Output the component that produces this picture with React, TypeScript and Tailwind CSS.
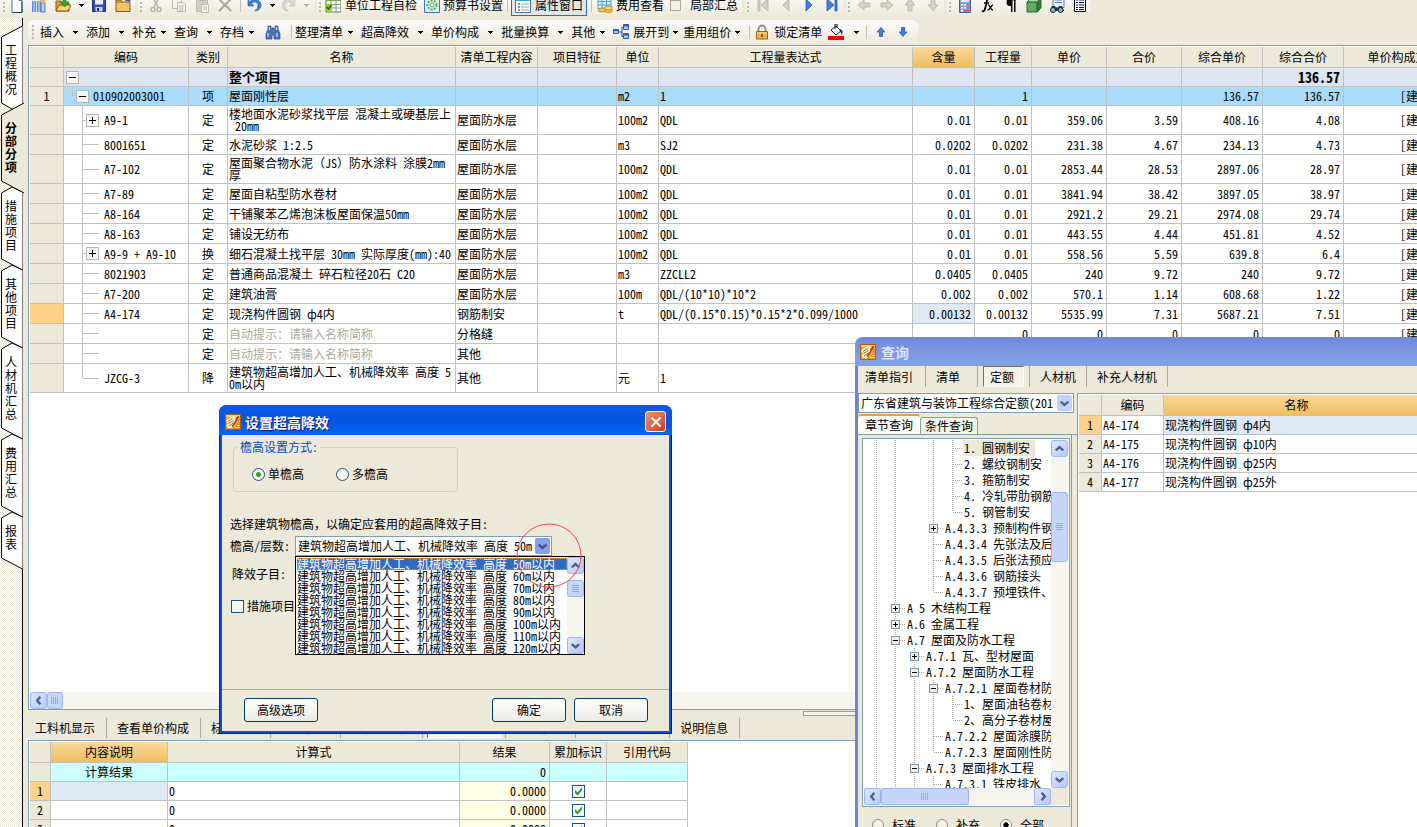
import React from "react";

type IconProps = { children: React.ReactNode; dim?: boolean };

function Icon({ children, dim }: IconProps) {
  return (
    <svg viewBox="0 0 16 16" className={dim ? "h-4 w-4 shrink-0 opacity-60" : "h-4 w-4 shrink-0"} aria-hidden="true">
      {children}
    </svg>
  );
}

const Caret = ({ dim }: { dim?: boolean }) => (
  <svg viewBox="0 0 5 3" className="h-[3px] w-[5px]" aria-hidden="true" shapeRendering="crispEdges">
    <path d="M0 0h5v1h-1v1h-1v1h-1v-1h-1v-1h-1z" fill={dim ? "#aca899" : "#000"} />
  </svg>
);

const Grip = () => (
  <span className="flex h-full w-[6px] shrink-0 items-center justify-center">
    <svg viewBox="0 0 2 14" className="h-[14px] w-[2px]" aria-hidden="true" shapeRendering="crispEdges">
      <path d="M0 0h2v2h-2zM0 4h2v2h-2zM0 8h2v2h-2zM0 12h2v2h-2z" fill="#b9b7a8" />
    </svg>
  </span>
);

const Sep = () => (
  <span className="flex h-full w-2 shrink-0 items-center justify-center">
    <span className="h-[14px] w-px bg-[#c1bfb0]" />
  </span>
);

function IconButton({ label, children, className }: { label: string; children: React.ReactNode; className: string }) {
  return (
    <button type="button" aria-label={label} className={`flex h-full shrink-0 items-center justify-center ${className}`}>
      {children}
    </button>
  );
}

const groupClass = "flex h-full shrink-0 items-center rounded-md bg-gradient-to-b from-[#fdfcfb] to-[#ebe8d9]";

const NewIcon = () => (
  <Icon>
    <path d="M3 .5h7l3 3v12H3z" fill="#fff" stroke="#4a6c9c" />
    <path d="M13 5v10.5H4" fill="none" stroke="#17365d" />
    <path d="M10 .5v3h3" fill="#bcd0ec" stroke="#4a6c9c" />
  </Icon>
);
const BuildingIcon = () => (
  <Icon>
    <path d="M1 4h9v11H1z" fill="#5b8bd6" />
    <path d="M10 6h4v9h-4z" fill="#b9d0f3" stroke="#4a78bd" />
    <path d="M3 4v11M5.500 4v11M8 4v11" stroke="#dfeafc" />
    <path d="M12 0l1 3 3 1-3 1-1 3-1-3-3-1 3-1z" fill="#f5b73b" />
  </Icon>
);
const OpenIcon = () => (
  <Icon>
    <path d="M1 14V4h5l1 2h7v8z" fill="#e2a336" stroke="#8a5b10" />
    <path d="M1 14l3-6h12l-3 6z" fill="#fbd46d" stroke="#8a5b10" />
    <path d="M8 1h3v4h3l-4.500 5L5 5h3z" fill="#39a536" stroke="#1c6d1b" strokeWidth=".7" />
  </Icon>
);
const SaveIcon = () => (
  <Icon>
    <path d="M1.500 1.500h13v13h-13z" fill="#3a49b8" stroke="#202c7e" />
    <path d="M4 1.500h8v6H4z" fill="#e8ecfb" />
    <path d="M4.500 10h7v4.500h-7z" fill="#cfd3e6" />
    <path d="M6 11h2v3H6z" fill="#202c7e" />
  </Icon>
);
const FolderIcon = () => (
  <Icon>
    <path d="M1 5h14v9.500H1z" fill="#f0c469" stroke="#805a1b" />
    <path d="M1 5V3h5l1 2" fill="#d9a23d" stroke="#805a1b" />
    <path d="M9 3l3-3 4 3-2 2z" fill="#3c577e" />
  </Icon>
);
const CutIcon = () => (
  <Icon dim>
    <path d="M5 1l5 9M11 1L6 10" stroke="#8d8b80" strokeWidth="1.500" />
    <circle cx="5" cy="12.500" r="2" fill="none" stroke="#8d8b80" strokeWidth="1.500" />
    <circle cx="11" cy="12.500" r="2" fill="none" stroke="#8d8b80" strokeWidth="1.500" />
  </Icon>
);
const CopyIcon = () => (
  <Icon dim>
    <path d="M1.500 1.500h7l2 2v8h-9z" fill="#f4f3ee" stroke="#99978c" />
    <path d="M6.500 5.500h6l2 2v7h-8z" fill="#f4f3ee" stroke="#99978c" />
    <path d="M8 9h5M8 11h5M8 13h4" stroke="#99978c" />
  </Icon>
);
const PasteIcon = () => (
  <Icon dim>
    <path d="M2.500 2.500h11v12h-11z" fill="#bab8ad" stroke="#99978c" />
    <path d="M5 1h6v3H5z" fill="#8d8b80" />
    <path d="M7.500 7.500h7v8h-7z" fill="#f4f3ee" stroke="#99978c" />
    <path d="M9 10h4M9 12h4" stroke="#99978c" />
  </Icon>
);
const DeleteIcon = () => (
  <Icon dim>
    <path d="M2 2l12 12M14 2L2 14" stroke="#77756b" strokeWidth="2" />
  </Icon>
);
const UndoIcon = () => (
  <Icon>
    <path d="M2 3v6h6L5.500 6.500C8 4 12 5 12 8.500c0 2.500-1.500 4-3.500 5.500 4 0 6.500-2.500 6.500-6C15 3 8.500.5 4 4.500z" fill="#3b7fe0" stroke="#1f56ac" strokeWidth=".6" />
  </Icon>
);
const RedoIcon = () => (
  <Icon dim>
    <path d="M14 3v6H8l2.500-2.500C8 4 4 5 4 8.500c0 2.500 1.500 4 3.500 5.500C3.500 14 1 11.500 1 8c0-5 6.500-7.500 11-3.500z" fill="#c4c2b8" stroke="#a09e93" strokeWidth=".6" />
  </Icon>
);
const CheckSheetIcon = () => (
  <Icon>
    <path d="M1 1h15v14H1z" fill="#fff" stroke="#557a4a" />
    <path d="M1 1h15v3H1z" fill="#67a653" />
    <path d="M1 7.500h15M1 11h15M6 4v11M11 4v11" stroke="#8c9788" />
    <path d="M0 7h7v7H0z" fill="#9fc62e" />
    <path d="M1.500 10l2 2 3-4" fill="none" stroke="#1d5a12" strokeWidth="1.300" />
  </Icon>
);
const GearSheetIcon = () => (
  <Icon>
    <path d="M.5.5h15v15H.5z" fill="#def1e9" stroke="#3e74b9" />
    <circle cx="8" cy="8" r="4.500" fill="none" stroke="#57ae68" strokeWidth="2" strokeDasharray="2 1.200" />
    <circle cx="8" cy="8" r="2" fill="#fff" stroke="#57ae68" />
  </Icon>
);
const PropIcon = () => (
  <Icon>
    <path d="M.5.5h15v15H.5z" fill="#fff" stroke="#5a7087" />
    <path d="M1 1h14v3H1z" fill="#31a7c9" />
    <path d="M3 7h2M3 10h2M3 13h2" stroke="#2d9a46" strokeWidth="1.500" />
    <path d="M6 7h8M6 10h8M6 13h8" stroke="#8fa2b5" />
  </Icon>
);
const FeeIcon = () => (
  <Icon>
    <path d="M1 1h13v11H1z" fill="#dff0fc" stroke="#4ba0d9" />
    <path d="M1 4.500h13M1 8h13M5 1v11M9.500 1v11" stroke="#4ba0d9" />
    <ellipse cx="5" cy="13" rx="4" ry="2" fill="#f3c158" stroke="#a66f10" strokeWidth=".7" />
    <ellipse cx="11.500" cy="13.500" rx="4" ry="2" fill="#f3c158" stroke="#a66f10" strokeWidth=".7" />
    <ellipse cx="11.500" cy="11" rx="4" ry="2" fill="#f8d887" stroke="#a66f10" strokeWidth=".7" />
  </Icon>
);
const Nav = ({ d, on }: { d: string; on?: boolean }) => (
  <Icon>
    <path d={d} fill={on ? "#3b7df0" : "#d4d2c8"} stroke={on ? "#1f55bd" : "#b3b1a6"} strokeWidth=".8" />
  </Icon>
);
const arrows = {
  left: "M8 3v3h6v4H8v3L2 8z",
  right: "M8 3v3H2v4h6v3l6-5z",
  up: "M3 8h3v6h4V8h3L8 2z",
  down: "M3 8h3V2h4v6h3l-5 6z",
};

function TopToolbar() {
  return (
    <div className="-mt-2 flex h-[26px] shrink-0 gap-[3px]" role="toolbar" aria-label="标准">
      <div className={`${groupClass} pl-[1px]`}>
        <Grip />
        <IconButton label="新建" className="w-5"><NewIcon /></IconButton>
        <IconButton label="新建工程" className="w-6"><BuildingIcon /></IconButton>
        <IconButton label="打开" className="w-6"><OpenIcon /></IconButton>
        <IconButton label="打开选项" className="w-3"><Caret /></IconButton>
        <IconButton label="保存" className="w-6"><SaveIcon /></IconButton>
        <IconButton label="导出" className="w-6"><FolderIcon /></IconButton>
      </div>
      <div className={groupClass}>
        <Grip />
        <IconButton label="剪切" className="w-[23px]"><CutIcon /></IconButton>
        <IconButton label="复制" className="w-[23px]"><CopyIcon /></IconButton>
        <IconButton label="粘贴" className="w-[23px]"><PasteIcon /></IconButton>
        <IconButton label="删除" className="w-[23px]"><DeleteIcon /></IconButton>
        <Sep />
        <IconButton label="撤销" className="w-5"><UndoIcon /></IconButton>
        <IconButton label="撤销列表" className="w-4"><Caret /></IconButton>
        <IconButton label="恢复" className="w-[18px]"><RedoIcon /></IconButton>
        <IconButton label="恢复列表" className="w-4"><Caret dim /></IconButton>
      </div>
      <div className={groupClass}>
        <Grip />
        <button type="button" className="flex items-center gap-1 pl-[2px]"><CheckSheetIcon />单位工程自检</button>
        <button type="button" className="flex items-center gap-[3px] pl-[7px]"><GearSheetIcon />预算书设置</button>
        <Sep />
        <button type="button" aria-pressed="true" className="flex h-[22px] items-center gap-1 border border-[#316ac5] bg-[#e1e6e8] px-[3px]">
          <PropIcon />属性窗口
        </button>
        <Sep />
        <button type="button" className="flex items-center gap-[3px] px-[2px]"><FeeIcon />费用查看</button>
        <label className="flex items-center gap-[9px] px-1">
          <input type="checkbox" className="h-[11px] w-[11px] appearance-none border border-[#aca899] bg-[#f4f2e8]" />
          局部汇总
        </label>
      </div>
      <div className={groupClass}>
        <Grip />
        <IconButton label="首行" className="w-[23px]"><Nav d="M3 2h2v12H3zM13 2v12L6 8z" /></IconButton>
        <IconButton label="上一行" className="w-[23px]"><Nav d="M11 2v12L5 8z" /></IconButton>
        <IconButton label="下一行" className="w-[23px]"><Nav on d="M5 2v12l6-6z" /></IconButton>
        <IconButton label="末行" className="w-[23px]"><Nav on d="M11 2h2v12h-2zM3 2v12l7-6z" /></IconButton>
      </div>
      <div className={groupClass}>
        <Grip />
        <IconButton label="左移" className="w-[23px]"><Nav d={arrows.left} /></IconButton>
        <IconButton label="右移" className="w-[23px]"><Nav d={arrows.right} /></IconButton>
        <IconButton label="上移" className="w-[23px]"><Nav d={arrows.up} /></IconButton>
        <IconButton label="下移" className="w-[23px]"><Nav d={arrows.down} /></IconButton>
      </div>
      <div className={groupClass}>
        <Grip />
        <IconButton label="计算器" className="w-[23px]">
          <Icon>
            <path d="M2.500.5h11v15h-11z" fill="#7ea0dc" stroke="#3f5f9f" />
            <path d="M4 2h8v3H4z" fill="#e5eefc" />
            <path d="M4 7h2v1.500H4zM7 7h2v1.500H7zM4 10h2v1.500H4zM7 10h2v1.500H7zM4 13h2v1.500H4z" fill="#fff" />
            <path d="M10 7h2v1.500h-2zM10 10h2v1.500h-2zM7 13h5v1.500H7z" fill="#e3484b" />
          </Icon>
        </IconButton>
        <IconButton label="函数" className="w-[23px]">
          <Icon>
            <path d="M10 2C7.500 1 7 3 6.500 6L5 12c-.5 2-1.500 2.500-3 2" fill="none" stroke="#000" strokeWidth="1.800" />
            <path d="M4 6h5M8 8c2-1 2 5 5 5M13 8c-2 0-3 5-5.500 5" fill="none" stroke="#000" strokeWidth="1.300" />
          </Icon>
        </IconButton>
        <IconButton label="段落" className="w-[23px]">
          <Icon>
            <path d="M13 2H7a3.500 3.500 0 0 0 0 7h1v6h1.500V3.500H11V15h1.500V3.500H13z" fill="#000" />
          </Icon>
        </IconButton>
        <IconButton label="立方体" className="w-[23px]">
          <Icon>
            <path d="M1 5h10v10H1z" fill="#5fae5c" stroke="#286c2c" />
            <path d="M1 5l4-4h10l-4 4z" fill="#a3d99d" stroke="#286c2c" />
            <path d="M11 5l4-4v10l-4 4z" fill="#327a35" stroke="#286c2c" />
          </Icon>
        </IconButton>
        <IconButton label="查找表" className="w-[23px]">
          <Icon>
            <path d="M4 .5h11v10H4z" fill="#e7effd" stroke="#5c7dbf" />
            <path d="M6 3h7M6 5.500h7" stroke="#5c7dbf" />
            <path d="M1 14l2-5h3l1 2h2l1-2h3l2 5" fill="#26364b" />
            <circle cx="4" cy="13" r="2.500" fill="#9db0c8" stroke="#14202f" />
            <circle cx="11.500" cy="13" r="2.500" fill="#9db0c8" stroke="#14202f" />
          </Icon>
        </IconButton>
        <IconButton label="列表" className="w-[23px]">
          <Icon>
            <path d="M2.500.5h11v14h-11z" fill="#fff" stroke="#000" />
            <path d="M4 3h2M4 5.500h2M4 8h2M4 10.500h2M4 12.500h2M7 3h5M7 5.500h5M7 8h5M7 10.500h5M7 12.500h5" stroke="#00007b" />
          </Icon>
        </IconButton>
      </div>
    </div>
  );
}

const caretBox = {
  wide: "flex w-[22px] justify-center",
  tight: "flex w-[18px] justify-center pr-1",
  slim: "flex w-[14px] justify-center pr-px",
};

function MenuItem({ label, icon, size = "wide" }: { label: string; icon?: React.ReactNode; size?: keyof typeof caretBox }) {
  return (
    <button type="button" className="flex h-full shrink-0 items-center">
      {icon && <span className="mr-1">{icon}</span>}
      {label}
      <span className={caretBox[size]}><Caret /></span>
    </button>
  );
}

function EditToolbar() {
  return (
    <div className="mt-[2px] ml-[28px] flex h-6 w-max shrink-0 items-center rounded-md bg-gradient-to-b from-[#fdfcfb] to-[#ebe8d9] pr-1 pl-[2px]" role="toolbar" aria-label="编辑">
      <Grip />
      <span className="w-1" />
      <MenuItem label="插入" />
      <MenuItem label="添加" />
      <MenuItem label="补充" size="tight" />
      <MenuItem label="查询" />
      <MenuItem label="存档" size="tight" />
      <IconButton label="查找" className="w-[21px]">
        <Icon>
          <path d="M3 2h3v3h1V4h2v1h1V2h3v3l2 5v5h-6v-4H7v4H1v-5l2-5z" fill="#4673b8" stroke="#234a8a" strokeWidth=".7" />
          <path d="M3 9v4M12 9v4M4.500 3v3M11.500 3v3" stroke="#c4d8f7" strokeWidth="1.200" />
        </Icon>
      </IconButton>
      <span className="w-1" />
      <Sep />
      <MenuItem label="整理清单" size="tight" />
      <MenuItem label="超高降效" />
      <MenuItem label="单价构成" />
      <MenuItem label="批量换算" />
      <MenuItem label="其他" size="tight" />
      <MenuItem
        label="展开到"
        size="slim"
        icon={
          <Icon>
            <path d="M5 8h4M9 3.500h2M9 3v10M9 12.500h2" stroke="#2a4f8e" fill="none" />
            <path d="M.5 5.500h5v4h-5zM10.500.5h5v5h-5zM10.500 9.500h5v5h-5z" fill="#a9c7f1" stroke="#2f61ad" />
            <path d="M.5 5.500h5v1.500h-5zM10.500.5h5v2h-5zM10.500 9.500h5v2h-5z" fill="#2f61ad" />
          </Icon>
        }
      />
      <MenuItem label="重用组价" size="slim" />
      <Sep />
      <button type="button" className="flex h-full items-center gap-1 pl-[1px]">
        <Icon>
          <path d="M4.500 8V5a3.500 3.500 0 0 1 7 0v3" fill="none" stroke="#8b8b87" strokeWidth="1.800" />
          <path d="M2.500 7.500h11v7.500h-11z" fill="#efb640" stroke="#93651a" />
          <path d="M3 9h10" stroke="#fbe3a2" />
          <path d="M7.200 10h1.600v3H7.200z" fill="#5d3c08" />
        </Icon>
        锁定清单
      </button>
      <IconButton label="填充颜色" className="w-7">
        <Icon>
          <path d="M3 6l5-4 5 5-5 4z" fill="#fff" stroke="#1b1b3a" />
          <path d="M7 5V0h2v4" fill="none" stroke="#1b1b3a" />
          <path d="M12 5c3 1 3 4 2 6-1-2-1-3-2.500-4z" fill="#0b2a86" />
          <path d="M0 12h16v4H0z" fill="#f00" />
        </Icon>
      </IconButton>
      <IconButton label="填充颜色列表" className="w-3"><Caret /></IconButton>
      <Sep />
      <IconButton label="上移行" className="w-[22px]">
        <svg viewBox="0 0 16 16" className="h-3 w-3" aria-hidden="true"><path d={arrows.up} fill="#3b7df0" stroke="#1f4fae" /></svg>
      </IconButton>
      <IconButton label="下移行" className="w-[22px]">
        <svg viewBox="0 0 16 16" className="h-3 w-3" aria-hidden="true"><path d={arrows.down} fill="#3b7df0" stroke="#1f4fae" /></svg>
      </IconButton>
    </div>
  );
}

const sideTabs = ["工程概况", "分部分项", "措施项目", "其他项目", "人材机汇总", "费用汇总", "报表"];

function SideTabs() {
  return (
    <nav aria-label="页签" className="flex w-[23px] shrink-0 flex-col border-r border-black bg-[repeating-conic-gradient(#ffffff_0_25%,#ece9d8_0_50%)] bg-[length:2px_2px] pt-[13px] whitespace-normal">
      {sideTabs.map((t, i) => {
        const active = i === 1;
        const h = 26 + 13 * t.length;
        const shape = active
          ? `M24 -6L1.500 6V${h - 6}L24 ${h + 6}`
          : i === 0
            ? `M22.500 -5L1.500 6V${h - 6}L12 ${h}L22.500 ${h + 5}`
            : `M22.500 5L12 0L1.500 6V${h - 6}L22.500 ${h + 5}`;
        return (
          <button key={t} type="button" className={active ? "relative z-10 w-[22px] px-[5px] pt-3 pb-[14px]" : "relative w-[22px] px-[5px] pt-3 pb-[14px]"}>
            <svg className="absolute top-0 left-0 h-full w-[23px] overflow-visible" aria-hidden="true">
              <path d={shape} fill={active ? "#ece9d8" : "#fff"} stroke="#000" />
            </svg>
            <span className={active ? "relative block w-3 text-xs leading-[13px] font-bold break-all" : "relative block w-3 text-xs leading-[13px] break-all"}>{t}</span>
          </button>
        );
      })}
    </nav>
  );
}

type Row = {
  code: string;
  kind: string;
  name: string;
  content: string;
  unit: string;
  expr: string;
  nums: string[];
  tall?: boolean;
  plus?: boolean;
  hint?: boolean;
  last?: boolean;
  current?: boolean;
};

const w = "屋面防水层";
const hint = "自动提示：请输入名称简称";
const rows: Row[] = [
  { code: "A9-1", kind: "定", name: "楼地面水泥砂浆找平层 混凝土或硬基层上\n 20mm", content: w, unit: "100m2", expr: "QDL", nums: ["0.01", "0.01", "359.06", "3.59", "408.16", "4.08"], tall: true, plus: true },
  { code: "8001651", kind: "定", name: "水泥砂浆 1:2.5", content: w, unit: "m3", expr: "SJ2", nums: ["0.0202", "0.0202", "231.38", "4.67", "234.13", "4.73"] },
  { code: "A7-102", kind: "定", name: "屋面聚合物水泥（JS）防水涂料 涂膜2mm\n厚", content: w, unit: "100m2", expr: "QDL", nums: ["0.01", "0.01", "2853.44", "28.53", "2897.06", "28.97"], tall: true },
  { code: "A7-89", kind: "定", name: "屋面自粘型防水卷材", content: w, unit: "100m2", expr: "QDL", nums: ["0.01", "0.01", "3841.94", "38.42", "3897.05", "38.97"] },
  { code: "A8-164", kind: "定", name: "干铺聚苯乙烯泡沫板屋面保温50mm", content: w, unit: "100m2", expr: "QDL", nums: ["0.01", "0.01", "2921.2", "29.21", "2974.08", "29.74"] },
  { code: "A8-163", kind: "定", name: "铺设无纺布", content: w, unit: "100m2", expr: "QDL", nums: ["0.01", "0.01", "443.55", "4.44", "451.81", "4.52"] },
  { code: "A9-9 + A9-10", kind: "换", name: "细石混凝土找平层 30mm 实际厚度(mm):40", content: w, unit: "100m2", expr: "QDL", nums: ["0.01", "0.01", "558.56", "5.59", "639.8", "6.4"], plus: true },
  { code: "8021903", kind: "定", name: "普通商品混凝土 碎石粒径20石 C20", content: w, unit: "m3", expr: "ZZCLL2", nums: ["0.0405", "0.0405", "240", "9.72", "240", "9.72"] },
  { code: "A7-200", kind: "定", name: "建筑油膏", content: w, unit: "100m", expr: "QDL/(10*10)*10*2", nums: ["0.002", "0.002", "570.1", "1.14", "608.68", "1.22"] },
  { code: "A4-174", kind: "定", name: "现浇构件圆钢 ф4内", content: "钢筋制安", unit: "t", expr: "QDL/(0.15*0.15)*0.15*2*0.099/1000", nums: ["0.00132", "0.00132", "5535.99", "7.31", "5687.21", "7.51"], current: true },
  { code: "", kind: "定", name: hint, content: "分格缝", unit: "", expr: "", nums: ["", "0", "0", "0", "0", "0"], hint: true },
  { code: "", kind: "定", name: hint, content: "其他", unit: "", expr: "", nums: ["", "0", "0", "0", "0", "0"], hint: true },
  { code: "JZCG-3", kind: "降", name: "建筑物超高增加人工、机械降效率 高度 5\n0m以内", content: "其他", unit: "元", expr: "1", nums: ["", "", "", "", "", ""], tall: true, last: true },
];

const Box = ({ plus }: { plus?: boolean }) => (
  <svg viewBox="0 0 13 13" className="h-[13px] w-[13px] shrink-0" aria-hidden="true" shapeRendering="crispEdges">
    <rect x=".5" y=".5" width="12" height="12" fill="#f7f6f2" stroke="#b4b4b4" />
    <path d={plus ? "M3 6h7v1H3zM6 3h1v7H6z" : "M3 6h7v1H3z"} fill="#000" />
  </svg>
);

const cell = "border-r border-b border-[#c0c0c0] p-0 align-middle";
const head = `${cell} bg-[#ece9d8] font-normal`;
const headHot = `${cell} bg-gradient-to-b from-[#fbd99a] to-[#efbf5f] font-normal`;
const text = `${cell} pl-px text-left`;
const num = `${cell} pr-[3px] text-right`;

function MainGrid() {
  return (
    <table className="w-[1434px] table-fixed border-separate border-spacing-0 whitespace-pre">
      <colgroup>
        <col className="w-[34px]" /><col className="w-[125px]" /><col className="w-[39px]" /><col className="w-[228px]" />
        <col className="w-[82px]" /><col className="w-[79px]" /><col className="w-[42px]" /><col className="w-[254px]" />
        <col className="w-[62px]" /><col className="w-[57px]" /><col className="w-[75px]" /><col className="w-[75px]" />
        <col className="w-[81px]" /><col className="w-[81px]" /><col className="w-[120px]" />
      </colgroup>
      <thead>
        <tr className="h-[21px]">
          <th className={head} />
          {["编码", "类别", "名称", "清单工程内容", "项目特征", "单位", "工程量表达式"].map((h) => <th key={h} className={head}>{h}</th>)}
          <th className={headHot}>含量</th>
          {["工程量", "单价", "合价", "综合单价", "综合合价", "单价构成文件"].map((h) => <th key={h} className={head}>{h}</th>)}
        </tr>
      </thead>
      <tbody>
        <tr className="h-[19px] bg-[#dee5f0] font-bold">
          <td className={`${cell} bg-[#ece9d8]`} />
          <td className={cell}><div className="flex pl-[2px]"><Box /></div></td>
          <td className={cell} />
          <td className={`${text} text-[13px]`}>整个项目</td>
          {[0, 1, 2, 3, 4, 5, 6, 7, 8].map((n) => <td key={n} className={cell} />)}
          <td className={`${num} text-[14px]`}>136.57</td>
          <td className={cell} />
        </tr>
        <tr className="h-[19px] bg-[#a8dcfb]">
          <td className={`${cell} bg-[#ece9d8] text-center`}>1</td>
          <td className={cell}>
            <div className="flex h-[18px]">
              <span className="ml-2 h-[9px] w-1 border-b border-l border-[#c0c0c0]" />
              <span className="flex items-center gap-1"><Box />010902003001</span>
            </div>
          </td>
          <td className={`${cell} text-center`}>项</td>
          <td className={text}>屋面刚性层</td>
          <td className={cell} /><td className={cell} />
          <td className={text}>m2</td>
          <td className={text}>1</td>
          <td className={cell} />
          <td className={num}>1</td>
          <td className={cell} /><td className={cell} />
          <td className={num}>136.57</td>
          <td className={num}>136.57</td>
          <td className={num}>[建筑工程]</td>
        </tr>
        {rows.map((r, i) => (
          <tr key={i} className={r.tall ? "h-[29px] leading-3" : "h-5"}>
            <td className={`${cell} ${r.current ? "bg-[#ffd28a]" : "bg-[#ece9d8]"}`} />
            <td className={cell}>
              <div className={r.tall ? "flex h-7" : "flex h-[19px]"}>
                <span className={r.last ? "h-[14px] w-[19px] border-r border-[#c0c0c0]" : "w-[19px] border-r border-[#c0c0c0]"} />
                <span className="flex items-center">
                  {r.plus ? <><span className="h-px w-[3px] bg-[#c0c0c0]" /><Box plus /></> : <span className="h-px w-4 bg-[#c0c0c0]" />}
                  <span className="pl-[5px]">{r.code}</span>
                </span>
              </div>
            </td>
            <td className={`${cell} text-center`}>{r.kind}</td>
            <td className={r.hint ? `${text} text-[#aca899]` : text}>{r.name}</td>
            <td className={text}>{r.content}</td>
            <td className={cell} />
            <td className={text}>{r.unit}</td>
            <td className={text}>{r.expr}</td>
            {r.nums.map((n, k) => <td key={k} className={r.current && k === 0 ? `${num} bg-[#dfe9f6]` : num}>{n}</td>)}
            <td className={num}>{r.last ? "" : "[建筑工程]"}</td>
          </tr>
        ))}
      </tbody>
    </table>
  );
}

const chevrons = {
  left: "M10 4L6.500 8L10 12",
  right: "M7 4l3.500 4L7 12",
  up: "M4 10l4-3.500L12 10",
  down: "M4 6.500L8 10l4-3.500",
};

function ScrollButton({ dir }: { dir: keyof typeof chevrons }) {
  return (
    <button type="button" aria-label={`滚动 ${dir}`} className="flex h-[17px] w-[17px] shrink-0 items-center justify-center rounded-[3px] border border-[#9db5f0] bg-gradient-to-br from-[#dfe8fe] to-[#b5c8f8]">
      <svg viewBox="0 0 16 16" className="h-[15px] w-[15px]" aria-hidden="true">
        <path d={chevrons[dir]} fill="none" stroke="#4d6185" strokeWidth="2.500" />
      </svg>
    </button>
  );
}

const thumb = "flex shrink-0 items-center justify-center rounded-[3px] border border-[#9db5f0] bg-[#c6d5fc]";
const GripH = () => (
  <svg viewBox="0 0 8 7" className="h-[7px] w-2" aria-hidden="true" shapeRendering="crispEdges"><path d="M0 0h1v7H0zM2 0h1v7H2zM4 0h1v7H4zM6 0h1v7H6z" fill="#8fa9ee" /></svg>
);
const GripV = () => (
  <svg viewBox="0 0 7 8" className="h-2 w-[7px]" aria-hidden="true" shapeRendering="crispEdges"><path d="M0 0h7v1H0zM0 2h7v1H0zM0 4h7v1H0zM0 6h7v1H0z" fill="#8fa9ee" /></svg>
);

const bottomTabs = ["查看单价构成", "标准换算", "换算信息", "特征及内容", "组价方案表", "工程信息", "反查图形工程", "说明信息"];
const pressedTab = "border border-t-[#716f64] border-r-white border-b-white border-l-[#716f64] bg-[#f5f4ec]";

function BottomPanel() {
  return (
    <section className="flex h-[117px] shrink-0 flex-col">
      <div className="relative flex h-[30px] shrink-0 items-end pb-[2px]" role="tablist">
        <button type="button" role="tab" className="h-5 border-r border-[#aca899] pr-[11px] pl-[7px]">工料机显示</button>
        {bottomTabs.map((t, i) =>
          i === 4 ? (
            <span key={t} className="flex h-5 border-r border-[#aca899] px-[4px]">
              <button type="button" role="tab" aria-selected="true" className={`h-5 px-[6px] ${pressedTab}`}>{t}</button>
            </span>
          ) : (
            <button key={t} type="button" role="tab" className="h-5 border-r border-[#aca899] pr-[11px] pl-[10px]">
              {t}
            </button>
          ),
        )}
        <span className="absolute top-[1px] left-[775px] h-[5px] w-[60px] border border-[#9a9a92] bg-[#f4f3ec]" />
      </div>
      <div className="min-h-0 flex-1 overflow-hidden border-t border-l border-[#7f9db9] bg-white pt-px pl-px">
        <table className="w-[658px] table-fixed border-separate border-spacing-0">
          <colgroup>
            <col className="w-[21px]" /><col className="w-[117px]" /><col className="w-[292px]" /><col className="w-[90px]" /><col className="w-[57px]" /><col className="w-[81px]" />
          </colgroup>
          <thead>
            <tr className="h-[21px]">
              <th className={head} />
              <th className={headHot}>内容说明</th>
              {["计算式", "结果", "累加标识", "引用代码"].map((h) => <th key={h} className={head}>{h}</th>)}
            </tr>
          </thead>
          <tbody>
            <tr className="h-[19px] bg-[#ccffff]">
              <td className={`${cell} bg-[#ece9d8]`} />
              <td className={`${cell} text-center`}>计算结果</td>
              <td className={cell} />
              <td className={num}>0</td>
              <td className={cell} /><td className={cell} />
            </tr>
            {[1, 2, 3].map((n) => (
              <tr key={n} className="h-[19px]">
                <td className={n === 1 ? `${cell} bg-[#ffd28a] text-center` : `${cell} bg-[#ece9d8] text-center`}>{n}</td>
                <td className={n === 1 ? `${cell} bg-[#dfe9f6]` : cell} />
                <td className={text}>0</td>
                <td className={`${num} bg-[#ffffe5]`}>0.0000</td>
                <td className={cell}>
                  <label className="relative mx-auto block h-[13px] w-[13px]">
                    <input type="checkbox" defaultChecked aria-label={`累加标识 ${n}`} className="block h-[13px] w-[13px] appearance-none border border-[#1c5180] bg-[#f6f6f2]" />
                    <svg viewBox="0 0 13 13" className="pointer-events-none absolute inset-0 h-[13px] w-[13px]" aria-hidden="true"><path d="M3 5v3l2.500 2.500L10 5.500v-3L5.500 7.500z" fill="#21a121" /></svg>
                  </label>
                </td>
                <td className={cell} />
              </tr>
            ))}
          </tbody>
        </table>
      </div>
    </section>
  );
}

const AppIcon = () => (
  <svg viewBox="0 0 16 16" className="h-4 w-4 shrink-0" aria-hidden="true">
    <path d="M.5.5h15v15H.5z" fill="#f29a1b" stroke="#b35c07" />
    <path d="M1 1h14v2H1z" fill="#ffd070" />
    <path d="M1.500 6l5-3.500 4 .5-.5 3 1.500 2-2 3.500-3.500 3-3.500-.5-.5-3 1-2-1.500-1z" fill="#fff6df" />
    <path d="M3 7.500l4.500-3M3.500 9.500l5-3M4 12l5-3.500" stroke="#a8560b" strokeWidth=".9" />
    <path d="M13.500 2L9.500 9.500 7 12.500" fill="none" stroke="#8c3c08" strokeWidth="1.500" />
    <path d="M10 13.500h4.500M12 11.500h2.500" stroke="#ffe7a6" />
  </svg>
);

type TreeRow = { guide: string; label: string; selected?: boolean };

/* guide letters, one per level: I line, T branch, L last branch, P closed, M open, _ blank */
const tree: TreeRow[] = [
  { guide: "II_IT", label: "1. 圆钢制安", selected: true },
  { guide: "II_IT", label: "2. 螺纹钢制安" },
  { guide: "II_IT", label: "3. 箍筋制安" },
  { guide: "II_IT", label: "4. 冷轧带肋钢筋" },
  { guide: "II_IL", label: "5. 钢管制安" },
  { guide: "II_P", label: "A.4.3.3 预制构件钢" },
  { guide: "II_T", label: "A.4.3.4 先张法及后" },
  { guide: "II_T", label: "A.4.3.5 后张法预应" },
  { guide: "II_T", label: "A.4.3.6 钢筋接头" },
  { guide: "II_L", label: "A.4.3.7 预埋铁件、" },
  { guide: "IP", label: "A 5 木结构工程" },
  { guide: "IP", label: "A.6 金属工程" },
  { guide: "IM", label: "A.7 屋面及防水工程" },
  { guide: "IIP", label: "A.7.1 瓦、型材屋面" },
  { guide: "IIM", label: "A.7.2 屋面防水工程" },
  { guide: "IIIM", label: "A.7.2.1 屋面卷材防" },
  { guide: "IIIIT", label: "1、屋面油毡卷材" },
  { guide: "IIIIL", label: "2、高分子卷材屋" },
  { guide: "IIIT", label: "A.7.2.2 屋面涂膜防" },
  { guide: "IIIL", label: "A.7.2.3 屋面刚性防" },
  { guide: "IIM", label: "A.7.3 屋面排水工程" },
  { guide: "IIIT", label: "A.7.3.1 铁皮排水" },
];

const guidePath: Record<string, string> = {
  I: "M9.500 0V16",
  T: "M9.500 0V16M9.500 8.500H19",
  L: "M9.500 0V8M9.500 8.500H19",
  P: "M9.500 0V16M9.500 8.500H19",
  M: "M9.500 0V16M9.500 8.500H19",
  _: "",
};

function Guide({ kind }: { kind: string }) {
  return (
    <svg viewBox="0 0 19 16" className="h-4 w-[19px] shrink-0" aria-hidden="true" shapeRendering="crispEdges">
      <path d={guidePath[kind]} stroke="#aca899" strokeDasharray="1 1" fill="none" />
      {(kind === "P" || kind === "M") && (
        <>
          <rect x="5.500" y="4.500" width="8" height="8" fill="#f3f1ea" stroke="#7898b5" />
          <path d={kind === "P" ? "M7 8h5v1H7zM9 6h1v5H9z" : "M7 8h5v1H7z"} fill="#000" />
        </>
      )}
    </svg>
  );
}

function TreeView() {
  return (
    <div className="ml-1 flex h-[369px] w-[208px] shrink-0 flex-col border border-[#7f9db9] bg-white p-px">
      <div className="flex min-h-0 flex-1">
        <ul className="min-w-0 flex-1 overflow-hidden pl-[3px]">
          {tree.map((r, i) => (
            <li key={i} className="flex h-4 items-center whitespace-pre">
              {r.guide.split("").map((g, k) => <Guide key={k} kind={g} />)}
              <span className={r.selected ? "ml-px shrink-0 bg-[#ece9d8] pr-[5px] pl-px leading-4" : "ml-px shrink-0 pl-px leading-4"}>{r.label}</span>
            </li>
          ))}
        </ul>
        <div className="flex w-[17px] shrink-0 flex-col bg-[#f5f4ef]">
          <ScrollButton dir="up" />
          <span className="h-[35px]" />
          <span className={`${thumb} h-[70px] w-[17px]`}><GripV /></span>
          <span className="flex-1" />
          <ScrollButton dir="down" />
        </div>
      </div>
      <div className="flex h-[17px] shrink-0 bg-[#ece9d8] pr-[17px]">
        <ScrollButton dir="left" />
        <span className={`${thumb} h-[17px] w-[88px]`}><GripH /></span>
        <span className="flex-1 bg-[#f5f4ef]" />
        <ScrollButton dir="right" />
      </div>
    </div>
  );
}

const quotas = ["现浇构件圆钢 ф4内", "现浇构件圆钢 ф10内", "现浇构件圆钢 ф25内", "现浇构件圆钢 ф25外"];

function QueryWindow() {
  return (
    <section aria-label="查询" className="absolute top-[337px] right-0 bottom-0 left-[855px] flex flex-col overflow-hidden rounded-tl-lg bg-[#ece9d8]">
      <header className="flex h-[29px] shrink-0 items-center gap-[5px] bg-gradient-to-b from-[#6f87dc] via-[#7b97e0] to-[#82a3ea] pl-[5px] text-sm font-bold text-[#d8e4f8]">
        <AppIcon />查询
      </header>
      <div className="flex min-h-0 flex-1 flex-col border-l-[3px] border-[#6f83dc]">
        <div className="flex h-[27px] shrink-0 items-start" role="tablist">
          <button type="button" role="tab" className="h-[21px] border-r border-[#aca899] pr-3 pl-[7px]">清单指引</button>
          <button type="button" role="tab" className="h-[21px] border-r border-[#aca899] pr-[17px] pl-[10px]">清单</button>
          <span className="flex h-[21px] border-r border-[#aca899] px-[5px]">
            <button type="button" role="tab" aria-selected="true" className={`h-[21px] pr-[9px] pl-[6px] ${pressedTab}`}>定额</button>
          </span>
          <button type="button" role="tab" className="h-[21px] border-r border-[#aca899] px-[10px]">人材机</button>
          <button type="button" role="tab" className="h-[21px] border-r border-[#aca899] px-[10px]">补充人材机</button>
        </div>
        <div className="flex min-h-0 flex-1">
          <div className="flex w-[219px] shrink-0 flex-col">
            <div className="relative h-5 w-[216px] shrink-0 border border-[#7f9db9] bg-white">
              <select aria-label="定额库" className="h-[18px] w-[196px] appearance-none overflow-hidden bg-white pl-[2px] text-xs">
                <option>广东省建筑与装饰工程综合定额(201</option>
              </select>
              <span className="pointer-events-none absolute top-px right-px flex h-4 w-[15px] items-center justify-center rounded-[2px] bg-[#c1d1fb]">
                <svg viewBox="0 0 16 16" className="h-4 w-4" aria-hidden="true"><path d={chevrons.down} fill="none" stroke="#4d6185" strokeWidth="2.500" /></svg>
              </span>
            </div>
            <div className="mt-[2px] flex h-5 shrink-0 items-end border-b border-[#919b9c]" role="tablist">
              <button type="button" role="tab" aria-selected="true" className="h-5 rounded-t-[3px] border-t-2 border-[#f0a02c] bg-[#fbfaf6] px-[7px]">章节查询</button>
              <button type="button" role="tab" className="h-[17px] rounded-t-[3px] border border-b-0 border-[#919b9c] bg-[#f4f3ec] px-1">条件查询</button>
            </div>
            <div className="flex w-[214px] flex-1 flex-col border-r border-[#919b9c] pt-[3px]">
              <TreeView />
              <fieldset className="flex items-center gap-5 pt-2 pl-[14px]">
                {["标准", "补充", "全部"].map((t) => (
                  <label key={t} className="flex items-center gap-2">
                    <input type="radio" name="scope" defaultChecked={t === "全部"} className="h-3 w-3 appearance-none rounded-full border border-[#8d8b80] bg-[#f4f2e8] checked:bg-[radial-gradient(circle,#000_35%,#fff_40%)]" />
                    <span className="leading-5">{t}</span>
                  </label>
                ))}
              </fieldset>
            </div>
          </div>
          <div className="min-w-0 flex-1 overflow-hidden border-t border-l border-[#7f9db9] bg-white pt-px pl-px">
            <table className="w-[351px] table-fixed border-separate border-spacing-0">
              <colgroup><col className="w-[23px]" /><col className="w-[62px]" /><col className="w-[266px]" /></colgroup>
              <thead>
                <tr className="h-[21px]"><th className={head} /><th className={head}>编码</th><th className={headHot}>名称</th></tr>
              </thead>
              <tbody>
                {quotas.map((q, i) => (
                  <tr key={q} className="h-[19px]">
                    <td className={i === 0 ? `${cell} bg-[#ffd28a] text-center` : `${cell} bg-[#ece9d8] text-center`}>{i + 1}</td>
                    <td className={text}>{`A4-${174 + i}`}</td>
                    <td className={i === 0 ? `${text} bg-[#dfe9f6]` : text}>{q}</td>
                  </tr>
                ))}
              </tbody>
            </table>
          </div>
        </div>
      </div>
    </section>
  );
}

const heights = [50, 60, 70, 80, 90, 100, 110, 120];
const dialogButton = "h-6 w-[74px] rounded-[3px] border border-[#003c74] bg-gradient-to-b from-white to-[#ecebe5]";
const radio = "h-[13px] w-[13px] appearance-none rounded-full border border-[#1c5180] bg-[#f6f6f2] checked:bg-[radial-gradient(circle,#21a121_25%,#f6f6f2_38%)]";

function HeightDialog() {
  return (
    <section role="dialog" aria-label="设置超高降效" className="absolute top-[405px] left-[219px] flex h-[329px] w-[453px] flex-col rounded-t-lg bg-[#0a4fe0] px-[3px] pb-[3px] shadow-[inset_1px_0_0_#0019cf,inset_-1px_-1px_0_#00138c]">
      <header className="-mx-[3px] flex h-[30px] shrink-0 items-center gap-1 rounded-t-lg bg-gradient-to-b from-[#0a5be8] via-[#0355e4] to-[#0464fb] pt-[3px] pr-[6px] pl-[6px] text-sm font-bold text-white">
        <AppIcon />
        <h2 className="flex-1 [text-shadow:1px_1px_#0f1089]">设置超高降效</h2>
        <button type="button" aria-label="关闭" className="flex h-[21px] w-[21px] items-center justify-center rounded-[3px] border border-white bg-gradient-to-br from-[#ee8f73] to-[#d2380f]">
          <svg viewBox="0 0 12 12" className="h-3 w-3" aria-hidden="true"><path d="M1.500 1.500l9 9M10.500 1.500l-9 9" stroke="#fff" strokeWidth="2" /></svg>
        </button>
      </header>
      <div className="flex flex-1 flex-col bg-[#ece9d8]">
        <div className="flex flex-1 flex-col px-2 pt-1">
          <fieldset className="ml-[3px] h-[53px] w-[225px] rounded-[4px] border border-[#d0d0bf] px-4">
            <legend className="-ml-3 px-[2px] text-[#0046d5]">檐高设置方式:</legend>
            <div className="flex gap-8 pt-[11px] pl-[2px]">
              <label className="flex items-center gap-[3px]"><input type="radio" name="eave" defaultChecked className={radio} />单檐高</label>
              <label className="flex items-center gap-[3px]"><input type="radio" name="eave" className={radio} />多檐高</label>
            </div>
          </fieldset>
          <p className="mt-6">选择建筑物檐高，以确定应套用的超高降效子目:</p>
          <div className="mt-1 flex items-center">
            <label htmlFor="floors" className="w-[65px]">檐高/层数:</label>
            <div className="relative h-5 w-[257px] border border-[#7f9db9] bg-white">
              <select id="floors" className="h-[18px] w-[238px] appearance-none overflow-hidden bg-white pl-[2px] text-xs">
                <option>建筑物超高增加人工、机械降效率 高度 50m</option>
              </select>
              <span className="pointer-events-none absolute top-px right-px flex h-4 w-[15px] items-center justify-center rounded-[2px] bg-[#86a0ee]">
                <svg viewBox="0 0 16 16" className="h-4 w-4" aria-hidden="true"><path d={chevrons.down} fill="none" stroke="#3d527b" strokeWidth="2.500" /></svg>
              </span>
              <div className="absolute top-[19px] -left-px z-10 flex h-[99px] w-[290px] border border-black bg-white">
                <ul role="listbox" aria-label="檐高/层数" className="min-w-0 flex-1 pt-px pl-px">
                  {heights.map((h) => (
                    <li key={h} role="option" aria-selected={h === 50} className={h === 50 ? "h-3 bg-[#316ac5] leading-3 whitespace-pre text-white outline-1 -outline-offset-1 outline-[#e0953a] outline-dotted" : "h-3 leading-3 whitespace-pre"}>
                      {`建筑物超高增加人工、机械降效率 高度 ${h}m以内`}
                    </li>
                  ))}
                </ul>
                <div className="flex w-[17px] shrink-0 flex-col bg-[#f5f4ef]">
                  <ScrollButton dir="up" />
                  <span className="h-[6px]" />
                  <span className={`${thumb} h-[17px] w-[17px]`}><GripV /></span>
                  <span className="flex-1" />
                  <ScrollButton dir="down" />
                </div>
              </div>
            </div>
          </div>
          <p className="mt-[10px] pl-[2px]">降效子目:</p>
          <label className="mt-4 flex items-center gap-[3px] pl-px">
            <input type="checkbox" className="h-[13px] w-[13px] appearance-none border border-[#1c5180] bg-[#f6f6f2]" />
            措施项目
          </label>
        </div>
        <footer className="flex h-[42px] shrink-0 items-start border-t border-[#aca899] pt-2 pr-[21px] pl-[22px]">
          <button type="button" className={dialogButton}>高级选项</button>
          <span className="flex-1" />
          <button type="button" className={`${dialogButton} mr-2`}>确定</button>
          <button type="button" className={dialogButton}>取消</button>
        </footer>
      </div>
      <svg viewBox="0 0 66 65" className="pointer-events-none absolute top-[118px] left-[297px] z-20 h-[65px] w-[66px]" aria-hidden="true">
        <ellipse cx="33" cy="32.500" rx="32" ry="31.500" fill="none" stroke="#f0494d" />
      </svg>
    </section>
  );
}

export default function App() {
  return (
    <div className="relative flex h-screen flex-col overflow-hidden bg-[#ece9d8] font-['Noto_Sans_Mono_CJK_SC','Noto_Sans_CJK_SC',monospace] text-xs leading-4 whitespace-nowrap text-black">
      <TopToolbar />
      <div className="flex min-h-0 flex-1">
        <SideTabs />
        <div className="flex min-w-0 flex-1 flex-col">
          <div className="-ml-[23px] pl-[23px]">
            <div className="-ml-[23px]"><EditToolbar /></div>
          </div>
          <main className="mt-px ml-[5px] flex min-h-0 min-w-0 flex-1 flex-col">
            <div className="flex min-h-0 flex-1 flex-col overflow-hidden border border-r-0 border-[#7f9db9] bg-white pt-px pl-px">
              <MainGrid />
              <span className="flex-1" />
              <div className="flex h-[17px] shrink-0 bg-[#f5f4ef]">
                <ScrollButton dir="left" />
                <span className={`${thumb} h-[17px] w-4`}><GripH /></span>
              </div>
            </div>
            <BottomPanel />
          </main>
        </div>
      </div>
      <QueryWindow />
      <HeightDialog />
    </div>
  );
}
